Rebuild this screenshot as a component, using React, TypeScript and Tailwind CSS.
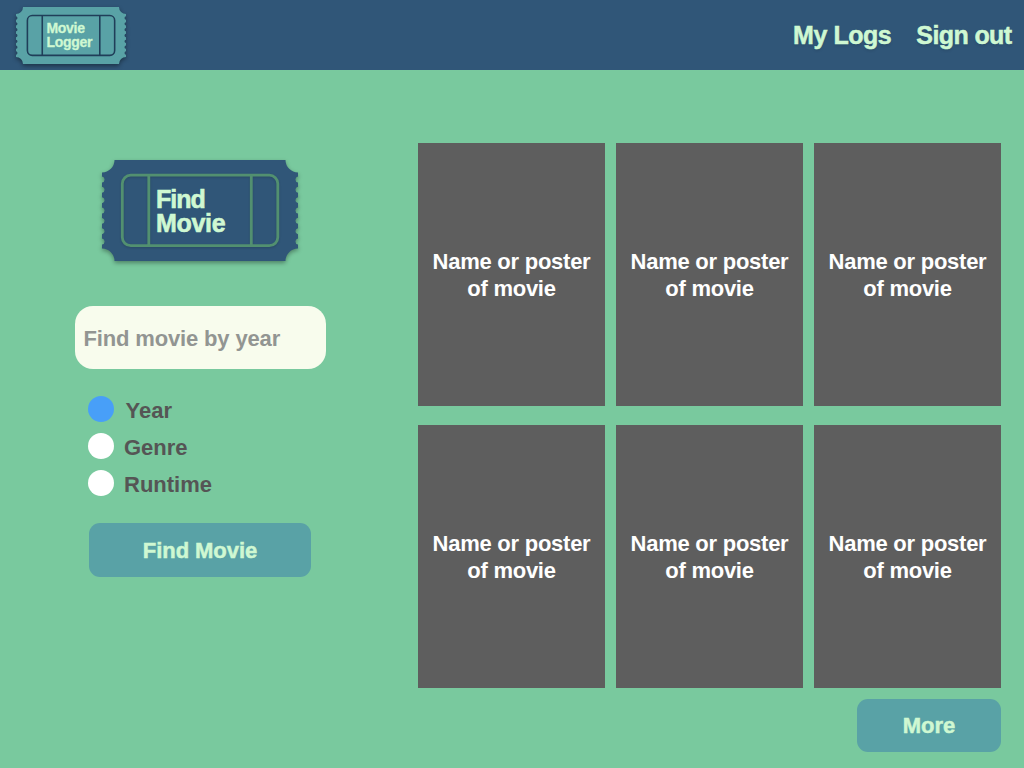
import React from "react";

type TicketProps = { className: string; body: string; line: string; lineShadow?: boolean };

const leftEdge = "v-1.8" + "v-2.2a3 3 0 0 0 0 -5.94v-2.2".repeat(7) + "v-1.8";
const rightEdge = "v1.8" + "v2.2a3 3 0 0 0 0 5.94v2.2".repeat(7) + "v1.8";
const outline = `M12.5 0H183.5A12.5 12.5 0 0 0 196 12.5${rightEdge}A12.5 12.5 0 0 0 183.5 101H12.5A12.5 12.5 0 0 0 0 88.5${leftEdge}A12.5 12.5 0 0 0 12.5 0Z`;

function Ticket({ className, body, line, lineShadow }: TicketProps) {
  return (
    <svg viewBox="0 0 196 101" preserveAspectRatio="none" className={className} aria-hidden="true">
      <path d={outline} fill={body} />
      <g
        fill="none"
        stroke={line}
        strokeWidth={2.8}
        className={lineShadow ? "drop-shadow-[0_1px_1px_rgba(0,0,0,0.15)]" : ""}
      >
        <rect x="20.3" y="15.2" width="155.5" height="70.5" rx="8.5" />
        <path d="M46.8 15.2V85.7M149.3 15.2V85.7" />
      </g>
    </svg>
  );
}

const movies = [1, 2, 3, 4, 5, 6];
const filters = ["Year", "Genre", "Runtime"];

export default function App() {
  const [selected, setSelected] = React.useState("Year");
  return (
    <div className="h-[768px] w-[1024px] overflow-hidden bg-[#79c99e] font-['Liberation_Sans',Arial,sans-serif] font-bold">
      <header className="flex h-[70px] items-center justify-between bg-[#305678] pr-[12.5px] pl-4 text-[#cff8d2]">
        <div className="grid h-[57px] w-[110px]">
          <Ticket
            className="col-start-1 row-start-1 h-[57px] w-[110px] overflow-visible drop-shadow-[0_2px_2px_rgba(0,0,0,0.4)]"
            body="#59a2a6"
            line="#203e59"
          />
          <div className="z-10 col-start-1 row-start-1 pt-[14px] pl-[30.5px] text-[14px] leading-[14px] tracking-[-0.3px] [-webkit-text-stroke:0.3px_#cff8d2]">
            Movie
            <br />
            Logger
          </div>
        </div>
        <nav className="flex gap-[25px] text-[25px] leading-[30px] [-webkit-text-stroke:0.5px_#cff8d2] [text-shadow:0_2px_3px_rgba(0,0,0,0.1)]">
          <a className="tracking-[-0.45px]">My Logs</a>
          <a className="tracking-[-0.6px]">Sign out</a>
        </nav>
      </header>
      <main className="flex h-[698px]">
        <section className="flex w-[400px] flex-col items-center pt-[90px]">
          <div className="grid h-[101px] w-[196px]">
            <Ticket
              className="col-start-1 row-start-1 h-[101px] w-[196px] overflow-visible drop-shadow-[0_2px_2px_rgba(0,0,0,0.35)]"
              body="#305678"
              line="#529070"
              lineShadow
            />
            <h1 className="z-10 col-start-1 row-start-1 pt-[27px] pl-[54px] text-[25px] leading-[24px] text-[#cff8d2] [-webkit-text-stroke:0.6px_#cff8d2]">
              <span className="tracking-[-1px]">Find</span>
              <br />
              <span className="tracking-[-0.3px]">Movie</span>
            </h1>
          </div>
          <input
            className="mt-[45px] h-[63px] w-[251px] rounded-[18px] bg-[#f8fced] px-[9px] pt-[2px] text-[22px] tracking-[-0.15px] outline-none placeholder:text-[#929592]"
            placeholder="Find movie by year"
          />
          <div className="mt-[27px] flex w-[224px] flex-col gap-[11px]">
            {filters.map((f) => (
              <button key={f} onClick={() => setSelected(f)} className="flex h-[26px] items-center text-[22px] text-[#555555]">
                <span className={`size-[26px] rounded-full ${selected === f ? "bg-[#489ff8]" : "bg-white"}`} />
                <span className={f === "Year" ? "pt-[2px] pl-[11.5px]" : "pt-[2px] pl-[10px]"}>{f}</span>
              </button>
            ))}
          </div>
          <button className="mt-[27px] h-[54px] w-[222px] rounded-[11px] bg-[#59a2a6] pt-px text-[22px] tracking-[-0.05px] text-[#cff8d2] [-webkit-text-stroke:0.5px_#cff8d2]">
            Find Movie
          </button>
        </section>
        <section className="flex flex-col items-end pt-[73px] pl-[18px]">
          <div className="grid grid-cols-[repeat(3,187px)] grid-rows-[repeat(2,263px)] gap-x-[11px] gap-y-[19px]">
            {movies.map((m) => (
              <div key={m} className="flex items-center justify-center bg-[#5e5e5e] pt-[1px] text-center text-[22px] leading-[27px] tracking-[-0.25px] text-white">
                Name or poster
                <br />
                of movie
              </div>
            ))}
          </div>
          <button className="mt-[11px] h-[53px] w-[144px] rounded-[11px] bg-[#59a2a6] text-[22px] text-[#cff8d2] [-webkit-text-stroke:0.5px_#cff8d2]">
            More
          </button>
        </section>
      </main>
    </div>
  );
}
